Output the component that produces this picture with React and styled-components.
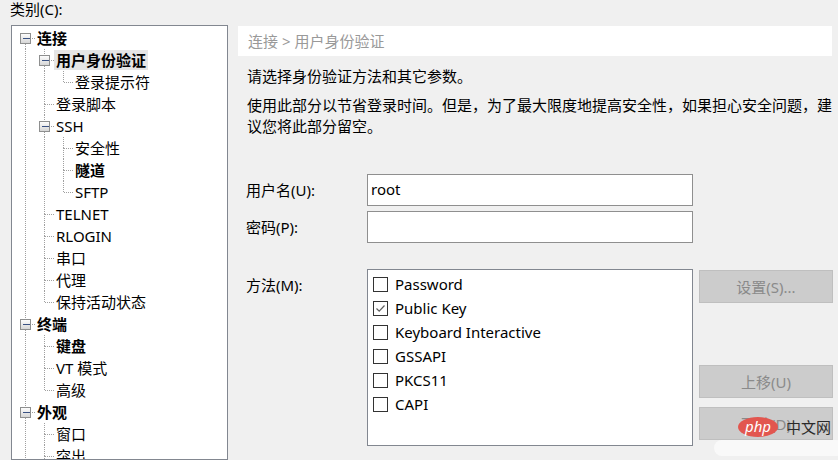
import React from "react";
import styled, { createGlobalStyle } from "styled-components";

const GlobalStyle = createGlobalStyle`
  html, body {
    margin: 0;
    padding: 0;
    background: #f0f0f0;
  }
  body {
    font-family: "Noto Sans", "Noto Sans CJK SC", sans-serif;
    font-size: 15px;
    color: #000;
    overflow: hidden;
  }
`;

const ROW = 22;
const STEP = 19;
const JOINT = 13;

const treeData = [
  {
    label: "连接",
    bold: true,
    children: [
      { label: "用户身份验证", bold: true, selected: true, children: [{ label: "登录提示符" }] },
      { label: "登录脚本" },
      {
        label: "SSH",
        children: [{ label: "安全性" }, { label: "隧道", bold: true }, { label: "SFTP" }],
      },
      { label: "TELNET" },
      { label: "RLOGIN" },
      { label: "串口" },
      { label: "代理" },
      { label: "保持活动状态" },
    ],
  },
  {
    label: "终端",
    bold: true,
    children: [{ label: "键盘", bold: true }, { label: "VT 模式" }, { label: "高级" }],
  },
  {
    label: "外观",
    bold: true,
    children: [{ label: "窗口" }, { label: "突出" }, { label: "颜色" }],
  },
  { label: "日志文件" },
  { label: "文件传输" },
];

// flatten the tree, remembering which ancestor rails keep going down
function flatten(nodes, level = 0, rails = [], out = []) {
  nodes.forEach((node, i) => {
    const last = i === nodes.length - 1;
    out.push({ ...node, level, rails, first: i === 0, last, hasKids: !!node.children });
    if (node.children) flatten(node.children, level + 1, [...rails, !last], out);
  });
  return out;
}

const rows = flatten(treeData);

const methods = [
  { label: "Password" },
  { label: "Public Key", checked: true },
  { label: "Keyboard Interactive" },
  { label: "GSSAPI" },
  { label: "PKCS11" },
  { label: "CAPI" },
];

const Window = styled.div`
  display: flex;
  height: 460px;
  overflow: hidden;
  position: relative;
`;

const Sidebar = styled.div`
  width: 238px;
  flex: none;
  display: flex;
  flex-direction: column;
`;

const CategoryLabel = styled.div`
  margin-left: 10px;
  height: 26px;
  line-height: 18px;
`;

const TreeBox = styled.div`
  margin-left: 11px;
  width: 217px;
  height: 460px;
  box-sizing: border-box;
  border: 1px solid #828790;
  background: #fff;
  padding-top: 1px;
  overflow: hidden;
`;

const TreeRow = styled.div`
  display: flex;
  align-items: center;
  height: ${ROW}px;
`;

const TreeLabel = styled.span`
  height: 20px;
  line-height: 20px;
  padding: 0 2px;
  white-space: nowrap;
  font-weight: ${(p) => (p.$bold ? 700 : 400)};
  background: ${(p) => (p.$selected ? "#e5e5e5" : "transparent")};
`;

const dots = { stroke: "#a0a0a0", strokeWidth: 1, strokeDasharray: "1 1", shapeRendering: "crispEdges" };

const Guides = ({ row }) => {
  const width = 23 + STEP * row.level;
  const mid = ROW / 2;
  const x = JOINT + STEP * row.level + 0.5;
  const upper = row.level > 0 || !row.first;
  return (
    <svg width={width} height={ROW} style={{ flex: "none", display: "block" }}>
      <defs>
        <linearGradient id="boxfill" x1="0" y1="0" x2="0" y2="1">
          <stop offset="0" stopColor="#ffffff" />
          <stop offset="1" stopColor="#d4d4d4" />
        </linearGradient>
      </defs>
      {row.rails.map((on, a) =>
        on ? <line key={a} x1={JOINT + STEP * a + 0.5} y1={0} x2={JOINT + STEP * a + 0.5} y2={ROW} {...dots} /> : null
      )}
      {upper && <line x1={x} y1={0} x2={x} y2={mid} {...dots} />}
      {!row.last && <line x1={x} y1={mid} x2={x} y2={ROW} {...dots} />}
      <line x1={x} y1={mid + 0.5} x2={width} y2={mid + 0.5} {...dots} />
      {row.hasKids && (
        <g shapeRendering="crispEdges">
          <rect x={x - 5} y={mid - 5 + 0.5} width={10} height={10} fill="url(#boxfill)" stroke="#8e8f8f" />
          <line x1={x - 3} y1={mid + 0.5} x2={x + 4} y2={mid + 0.5} stroke="#3a5283" strokeWidth={1.4} />
        </g>
      )}
    </svg>
  );
};

const Main = styled.div`
  flex: 1;
  padding: 26px 4px 0 0;
  display: flex;
  flex-direction: column;
`;

const Breadcrumb = styled.div`
  height: 30px;
  line-height: 30px;
  background: #fff;
  color: #999;
  padding-left: 10px;
  margin-right: 2px;
`;

const Intro = styled.div`
  margin-top: 10px;
  padding-left: 9px;
  display: flex;
  flex-direction: column;
  gap: 8px;
`;

const Para = styled.p`
  margin: 0;
  line-height: 21px;
`;

const Form = styled.div`
  margin-top: 32px;
  padding-left: 8px;
`;

const FieldRow = styled.div`
  display: flex;
  align-items: flex-start;
  margin-top: ${(p) => p.$top ?? 5}px;
`;

const FieldLabel = styled.label`
  width: 121px;
  flex: none;
  height: 32px;
  line-height: 32px;
`;

const TextInput = styled.input`
  width: 326px;
  height: 32px;
  box-sizing: border-box;
  border: 1px solid #8f8f8f;
  background: #fff;
  padding: 0 0 3px 3px;
  font: inherit;
  color: #000;
  outline: none;
`;

const MethodList = styled.div`
  width: 326px;
  height: 177px;
  box-sizing: border-box;
  border: 1px solid #828790;
  background: #fff;
  padding: 2px 0 0 5px;
`;

const CheckRow = styled.div`
  height: 24px;
  display: flex;
  align-items: center;
  gap: 7px;
`;

const Box = styled.span`
  width: 15px;
  height: 15px;
  box-sizing: border-box;
  border: 1px solid #333;
  background: #fff;
  display: flex;
  align-items: center;
  justify-content: center;
`;

const ButtonStack = styled.div`
  margin-left: 6px;
  padding-top: 1px;
  width: 134px;
  display: flex;
  flex-direction: column;
`;

const Button = styled.button`
  height: 33px;
  margin-top: ${(p) => p.$space ?? 0}px;
  box-sizing: border-box;
  border: 1px solid #bfbfbf;
  background: #cccccc;
  color: #8a8a8a;
  font: inherit;
  padding: 0;
`;

const Watermark = styled.div`
  position: absolute;
  left: 738px;
  top: 416px;
  display: flex;
  align-items: center;
  gap: 8px;
`;

const PhpBadge = styled.span`
  width: 40px;
  height: 20px;
  border-radius: 50%;
  background: #e2564f;
  color: #fff;
  font-style: italic;
  font-size: 15px;
  line-height: 18px;
  text-align: center;
`;

const SiteName = styled.span`
  color: #2a2a2a;
  font-size: 15px;
`;

const Smudge = styled.div`
  position: absolute;
  left: 714px;
  top: 440px;
  width: 130px;
  height: 16px;
  border-radius: 8px;
  background: rgba(250, 250, 250, 0.85);
`;

const Check = () => (
  <svg width="11" height="11" viewBox="0 0 11 11">
    <path d="M1.5 5.5 L4.2 8.2 L9.5 2.5" fill="none" stroke="#5f5f5f" strokeWidth="1.2" />
  </svg>
);

export default function App() {
  return (
    <>
      <GlobalStyle />
      <Window>
        <Sidebar>
          <CategoryLabel>类别(C):</CategoryLabel>
          <TreeBox>
            {rows.map((row, i) => (
              <TreeRow key={i}>
                <Guides row={row} />
                <TreeLabel $bold={row.bold} $selected={row.selected}>
                  {row.label}
                </TreeLabel>
              </TreeRow>
            ))}
          </TreeBox>
        </Sidebar>
        <Main>
          <Breadcrumb>连接 &gt; 用户身份验证</Breadcrumb>
          <Intro>
            <Para>请选择身份验证方法和其它参数。</Para>
            <Para>使用此部分以节省登录时间。但是，为了最大限度地提高安全性，如果担心安全问题，建议您将此部分留空。</Para>
          </Intro>
          <Form>
            <FieldRow>
              <FieldLabel>用户名(U):</FieldLabel>
              <TextInput defaultValue="root" />
            </FieldRow>
            <FieldRow>
              <FieldLabel>密码(P):</FieldLabel>
              <TextInput type="password" />
            </FieldRow>
            <FieldRow $top={26}>
              <FieldLabel>方法(M):</FieldLabel>
              <MethodList>
                {methods.map((m) => (
                  <CheckRow key={m.label}>
                    <Box>{m.checked && <Check />}</Box>
                    {m.label}
                  </CheckRow>
                ))}
              </MethodList>
              <ButtonStack>
                <Button>设置(S)...</Button>
                <Button $space={62}>上移(U)</Button>
                <Button $space={9}>下移(D)</Button>
              </ButtonStack>
            </FieldRow>
          </Form>
        </Main>
        <Smudge />
        <Watermark>
          <PhpBadge>php</PhpBadge>
          <SiteName>中文网</SiteName>
        </Watermark>
      </Window>
    </>
  );
}
